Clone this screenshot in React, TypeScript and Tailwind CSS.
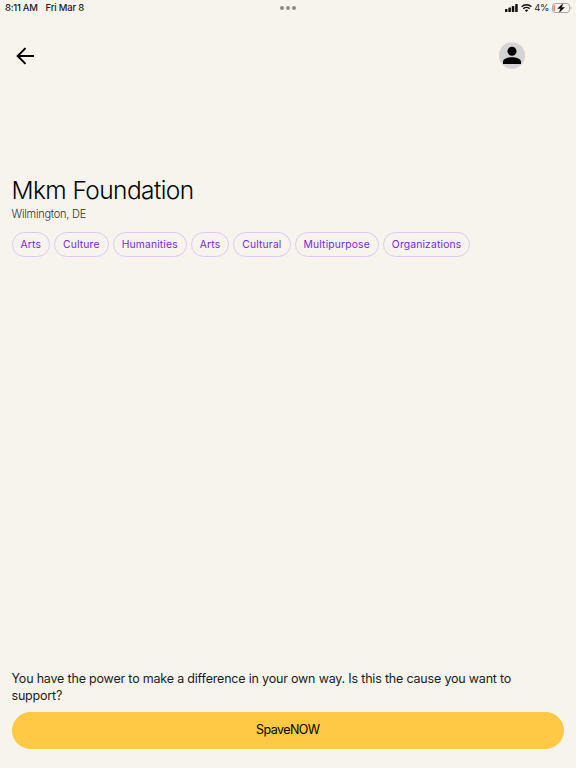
const tags = [
  "Arts",
  "Culture",
  "Humanities",
  "Arts",
  "Cultural",
  "Multipurpose",
  "Organizations",
];

function StatusBar() {
  return (
    <div className="grid h-4 grid-cols-3 items-center pl-[5px] pr-[4px] text-[9.5px] leading-4 font-medium text-[#222]">
      <div className="flex gap-[8px] whitespace-pre">
        <span className="tracking-[-0.3px]">8:11 AM</span>
        <span className="tracking-[-0.22px]">Fri Mar 8</span>
      </div>
      <div className="flex justify-center gap-[2px] pr-[1px]">
        <span className="size-[4px] rounded-full bg-[#8d8b86]" />
        <span className="size-[4px] rounded-full bg-[#8d8b86]" />
        <span className="size-[4px] rounded-full bg-[#8d8b86]" />
      </div>
      <div className="flex items-center justify-end">
        <svg width="13" height="8" viewBox="0 0 13 8" fill="#111">
          <rect x="0" y="5" width="2.5" height="3" rx="0.6" />
          <rect x="3.4" y="3.6" width="2.5" height="4.4" rx="0.6" />
          <rect x="6.8" y="1.9" width="2.5" height="6.1" rx="0.6" />
          <rect x="10.2" y="0" width="2.5" height="8" rx="0.6" />
        </svg>
        <svg
          className="ml-[3px]"
          width="11"
          height="8"
          viewBox="0 0 11 8"
          fill="none"
          stroke="#111"
          strokeWidth="1.4"
        >
          <path d="M0.6 2.8a7 7 0 0 1 9.8 0" />
          <path d="M2.3 4.7a4.6 4.6 0 0 1 6.4 0" />
          <path d="M5.5 8 3.8 6.2a2.5 2.5 0 0 1 3.4 0z" fill="#111" stroke="none" />
        </svg>
        <span className="ml-[2.5px] font-normal tracking-[-0.4px]">4%</span>
        <svg className="ml-[3px]" width="20" height="10" viewBox="0 0 20 10">
          <rect
            x="0.5"
            y="0.5"
            width="17"
            height="9"
            rx="2.6"
            fill="none"
            stroke="#aaa8a4"
          />
          <path d="M18.6 3.5a1.7 1.7 0 0 1 0 3z" fill="#aaa8a4" />
          <rect x="1.6" y="2" width="1.2" height="6" rx="0.6" fill="#fa5a50" />
          <path
            d="M10.8 0.8 5.7 5.5h3L7.4 9.2l5.1-4.7H9.5z"
            fill="#000"
            stroke="#000"
            strokeWidth="0.4"
          />
        </svg>
      </div>
    </div>
  );
}

export default function App() {
  return (
    <div className="flex h-screen w-full flex-col overflow-hidden bg-[#f7f4ed] font-['Inter','Liberation_Sans',sans-serif] text-black">
      <StatusBar />
      <header className="mt-[26px] flex h-[27px] items-center justify-between pr-[51px] pl-[16px]">
        <button aria-label="Back">
          <svg
            width="18"
            height="18"
            viewBox="0 0 18 18"
            fill="none"
            stroke="#000"
            strokeWidth="2"
          >
            <path d="M18 9H2M9.5 1.1 1.7 9l7.8 7.9" />
          </svg>
        </button>
        <button aria-label="Profile">
          <svg width="26" height="27" viewBox="0 0 26 27">
            <ellipse cx="13" cy="13.5" rx="13" ry="13.3" fill="#d4d4d4" />
            <circle cx="13" cy="9.2" r="4.5" />
            <path d="M4 22v-2.2c0-3.2 5.4-4.6 9-4.6s9 1.4 9 4.6V22z" />
          </svg>
        </button>
      </header>
      <main className="mt-[105px] px-[11.5px]">
        <h1 className="text-[24.5px] leading-8 font-light tracking-[-0.58px] whitespace-nowrap">
          Mkm Foundation
        </h1>
        <p className="text-[11px] leading-4 font-light tracking-[-0.24px] text-[#333]">
          Wilmington, DE
        </p>
        <div className="mt-[10px] flex gap-[4px]">
          {tags.map((tag, index) => (
            <span
              key={index}
              className="flex h-[24.5px] items-center rounded-full border border-[#ddc9f6] px-[8px] text-[10.3px] tracking-[0.17px] text-[#7726e0]"
            >
              {tag}
            </span>
          ))}
        </div>
      </main>
      <footer className="mt-auto pr-[12px] pb-[19px] pl-[11.5px]">
        <p className="text-[12.5px] leading-[17px] tracking-[-0.19px] text-[#1c1c1c]">
          You have the power to make a difference in your own way. Is this the
          cause you want to
          <br />
          support?
        </p>
        <button className="mt-[8px] h-[37.5px] w-full rounded-full bg-[#ffc845] pt-[1px] text-[12.5px] tracking-[-0.55px]">
          SpaveNOW
        </button>
      </footer>
    </div>
  );
}
